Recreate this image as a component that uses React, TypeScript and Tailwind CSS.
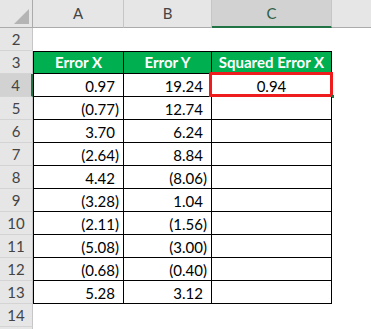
import React from "react";

const rows: [string, string][] = [
  ["0.97", "19.24"],
  ["(0.77)", "12.74"],
  ["3.70", "6.24"],
  ["(2.64)", "8.84"],
  ["4.42", "(8.06)"],
  ["(3.28)", "1.04"],
  ["(2.11)", "(1.56)"],
  ["(5.08)", "(3.00)"],
  ["(0.68)", "(0.40)"],
  ["5.28", "3.12"],
];

// accounting style: positives keep room for the closing paren
const Num: React.FC<{ v: string }> = ({ v }) => (
  <span>
    {v}
    {!v.startsWith("(") && <span className="invisible">)</span>}
  </span>
);

const RowHead: React.FC<{ n?: number; active?: boolean }> = ({ n, active }) => (
  <div
    className={[
      "flex items-center justify-center border-b border-[#d4d4d4] text-[15px]",
      active
        ? "bg-[#d2d2d2] border-r-2 border-r-[#217346] text-[#444]"
        : "bg-[#e6e6e6] border-r border-r-[#c6c6c6] text-[#444]",
    ].join(" ")}
  >
    {n}
  </div>
);

const App: React.FC = () => {
  return (
    <div
      className="w-[371px] h-[329px] overflow-hidden bg-white text-black"
      style={{ fontFamily: "Lato, 'Open Sans', sans-serif" }}
    >
      <div className="grid grid-cols-[33px_91px_88px_120px_1fr] grid-rows-[28px] auto-rows-[23px]">
        {/* corner */}
        <div className="relative bg-[#e6e6e6] border-r border-b border-[#ababab]">
          <svg className="absolute right-[3px] bottom-[3px]" width="15" height="15" viewBox="0 0 15 15">
            <polygon points="15,0 15,15 0,15" fill="#b4b4b4" />
          </svg>
        </div>
        {/* column headers */}
        <div className="flex items-center justify-center bg-[#e6e6e6] border-r border-[#c6c6c6] border-b border-b-[#ababab] text-[15px] text-[#444]">
          A
        </div>
        <div className="flex items-center justify-center bg-[#e6e6e6] border-r border-[#c6c6c6] border-b border-b-[#ababab] text-[15px] text-[#444]">
          B
        </div>
        <div className="flex items-center justify-center bg-[#d2d2d2] border-r border-[#c6c6c6] border-b-2 border-b-[#217346] text-[15px] text-[#2f5f45]">
          C
        </div>
        <div className="bg-[#e6e6e6] border-b border-[#ababab]" />

        {/* row 2 */}
        <RowHead n={2} />
        <div className="col-span-4" />

        {/* row 3 headers */}
        <RowHead n={3} />
        {["Error X", "Error Y", "Squared Error X"].map((h, i) => (
          <div
            key={h}
            className={[
              "flex items-center justify-center bg-[#00b050] text-white font-bold text-[15px] border-t border-r border-b border-black",
              i === 0 ? "border-l" : "",
            ].join(" ")}
          >
            {h}
          </div>
        ))}
        <div />

        {/* data rows */}
        {rows.map(([a, b], i) => (
          <React.Fragment key={i}>
            <RowHead n={i + 4} active={i === 0} />
            <div className="flex items-center justify-end pr-[4px] pt-[2px] border-l border-r border-b border-black text-[15px]">
              <Num v={a} />
            </div>
            <div className="flex items-center justify-end pr-[4px] pt-[2px] border-r border-b border-black text-[15px]">
              <Num v={b} />
            </div>
            <div className="relative flex items-center justify-center pt-[2px] border-r border-b border-black text-[15px]">
              {i === 0 && (
                <>
                  0.94
                  <div className="absolute -left-[3px] -top-[2px] -right-[2px] -bottom-[1px] border-[3px] border-[#ee1c1c]" />
                  <div className="absolute -right-[3px] -bottom-[2px] w-[3px] h-[3px] bg-[#217346]" />
                </>
              )}
            </div>
            <div />
          </React.Fragment>
        ))}

        {/* row 14 and the top of row 15 */}
        <RowHead n={14} />
        <div className="col-span-4" />
        <RowHead />
        <div className="col-span-4" />
      </div>
    </div>
  );
};

export default App;
